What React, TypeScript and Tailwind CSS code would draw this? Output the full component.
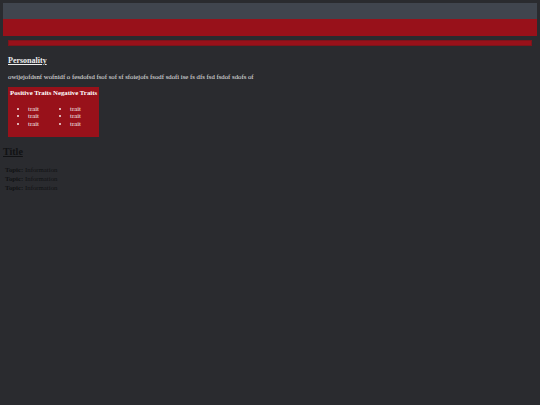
export default function App() {
  const traits = ["trait", "trait", "trait"];
  return (
    <div className="min-h-[405px] bg-[#2a2b2f] p-[3px] font-['Liberation_Serif',serif]">
      <header className="h-[16px] bg-[#40454e]"></header>
      <nav className="h-[17px] bg-[#98111a]"></nav>

      <section className="px-[5px] pt-[4px]">
        <div className="h-[6px] bg-[#98111a] border border-[#7d141b]"></div>

        <h2 className="mt-[9px] text-[8px] font-bold text-[#eeeeee] underline">Personality</h2>
        <p className="mt-[5px] text-[6.75px] text-[#e6e6e6]">
          owijejofdsnf wofnidf o fesdofsd fsof sof sf sfoiejofs fsodf sdofi ise fs dfs fsd fsdof sdofs of
        </p>

        <div className="mt-[5px] w-[91px] bg-[#98111a] pl-[2px] pt-[2px] pb-[9px] text-[6.8px] leading-[7.6px] text-[#f3e6e6]">
          <div className="flex gap-[1.5px] font-bold text-white">
            <span>Positive Traits</span>
            <span>Negative Traits</span>
          </div>
          <div className="mt-[8px] flex">
            <ul className="w-[43px] list-disc pl-[18px]">
              {traits.map((t, i) => (
                <li key={i}>{t}</li>
              ))}
            </ul>
            <ul className="list-disc pl-[17px]">
              {traits.map((t, i) => (
                <li key={i}>{t}</li>
              ))}
            </ul>
          </div>
        </div>
      </section>

      <section className="pt-[7px]">
        <h1 className="text-[10px] font-bold text-[#111214] underline">Title</h1>
        <div className="mt-[6px] pl-[2px] text-[6.8px] text-[#111214] leading-[9px]">
          <div><b>Topic:</b> Information</div>
          <div><b>Topic:</b> Information</div>
          <div><b>Topic:</b> Information</div>
        </div>
      </section>
    </div>
  );
}
